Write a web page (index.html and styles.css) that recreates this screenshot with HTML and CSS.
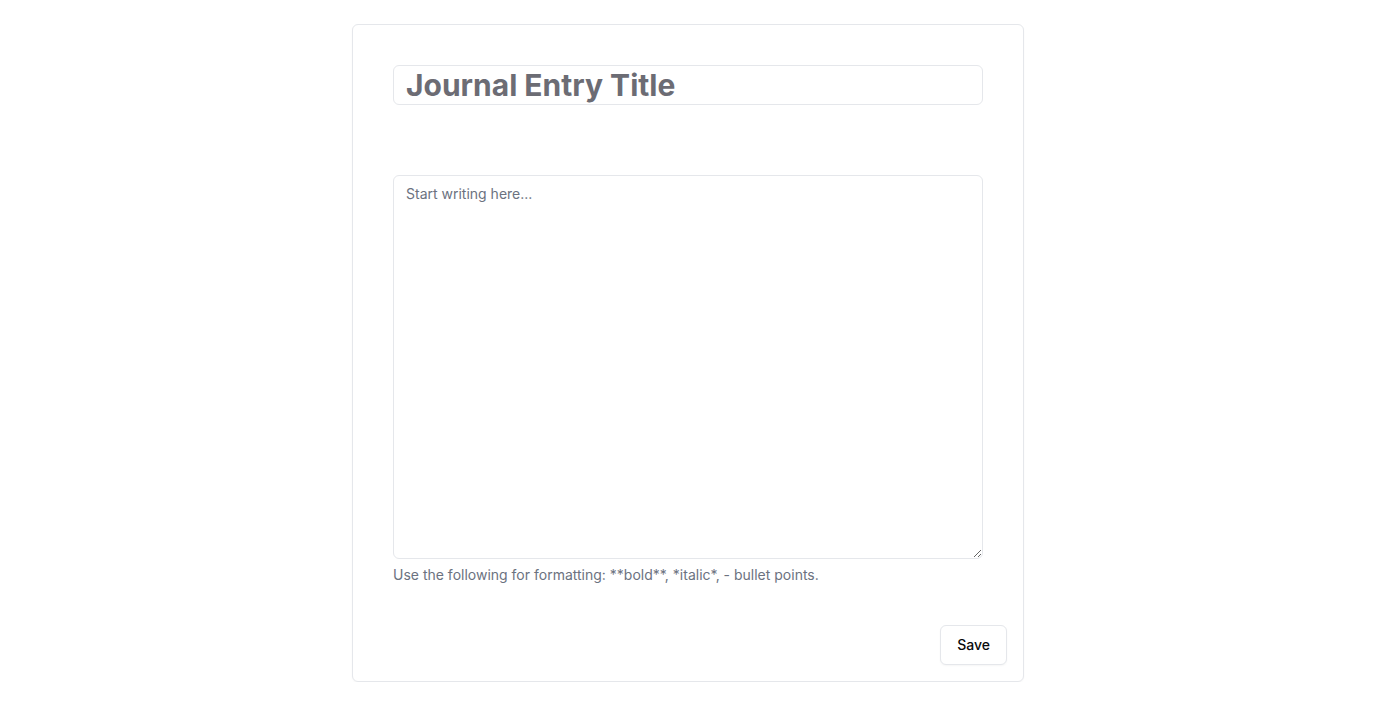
FILE: index.html
```html
<!DOCTYPE html>
<html>
<head>
<meta charset="utf-8">
<link rel="stylesheet" href="styles.css">
</head>
<body>
<div class="page">
  <div class="card">
    <div class="card-content">
      <input class="title-input" type="text" placeholder="Journal Entry Title">
      <textarea class="body-input" placeholder="Start writing here..."></textarea>
      <p class="hint">Use the following for formatting: **bold**, *italic*, - bullet points.</p>
    </div>
    <div class="card-footer">
      <button class="btn">Save</button>
    </div>
  </div>
</div>
</body>
</html>
```
FILE: styles.css
```css
* { box-sizing: border-box; }
html, body { margin: 0; padding: 0; background: #ffffff; }
body { font-family: Inter, "Noto Sans", sans-serif; color: #09090b; }
.page { display: flex; justify-content: center; padding-top: 24px; }
.card {
  width: 672px;
  border: 1px solid #e5e7eb;
  border-radius: 6px;
  background: #fff;
  box-shadow: 0 1px 2px rgba(0,0,0,0.03);
}
.card-content { padding: 40px 40px 24px; display: flex; flex-direction: column; }
.title-input {
  height: 40px;
  width: 100%;
  border: 1px solid #e5e7eb;
  border-radius: 6px;
  padding: 0 12px;
  font-family: Inter, sans-serif;
  font-size: 30px;
  font-weight: 700;
  color: #09090b;
  outline: none;
}
.title-input::placeholder { color: #6c6c74; opacity: 1; }
.body-input {
  margin-top: 70px;
  height: 384px;
  width: 100%;
  border: 1px solid #e5e7eb;
  border-radius: 6px;
  padding: 8px 12px;
  font-family: Inter, sans-serif;
  font-size: 14px;
  line-height: 20px;
  color: #09090b;
  outline: none;
  resize: vertical;
  display: block;
}
.body-input::placeholder { color: #6b7280; opacity: 1; }
.hint { margin: 6px 0 0; font-size: 14px; line-height: 20px; color: #6b7280; }
.card-footer { display: flex; justify-content: flex-end; padding: 16px; }
.btn {
  height: 40px;
  padding: 0 16px 1px;
  border: 1px solid #e5e7eb;
  border-radius: 6px;
  background: #fff;
  font-family: Inter, sans-serif;
  font-size: 14px;
  font-weight: 500;
  color: #09090b;
  box-shadow: 0 1px 2px rgba(0,0,0,0.04);
}
```
